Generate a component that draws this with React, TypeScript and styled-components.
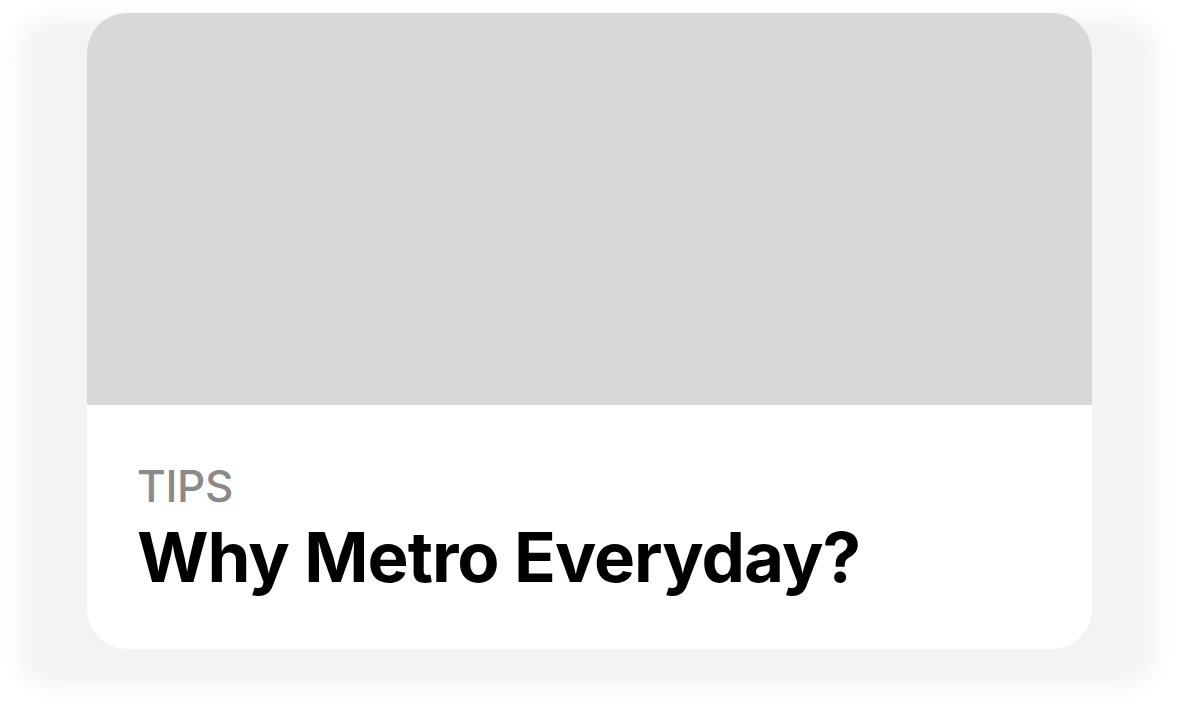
import React from "react";
import styled, { createGlobalStyle } from "styled-components";

const GlobalStyle = createGlobalStyle`
  html, body {
    margin: 0;
    padding: 0;
    background: #ffffff;
    font-family: Inter, "Noto Sans", "Liberation Sans", sans-serif;
  }
`;

const Page = styled.div`
  width: 1179px;
  height: 710px;
  box-sizing: border-box;
  padding: 13px 0 0 87px;
  overflow: hidden;
`;

const CardWrap = styled.div`
  position: relative;
  width: 1005px;
  height: 636px;
  isolation: isolate;

  &::before {
    content: "";
    position: absolute;
    top: 6px;
    left: -67px;
    right: -63px;
    bottom: -36px;
    background: #f3f3f3;
    filter: blur(10px);
    border-radius: 30px;
    z-index: -1;
  }
`;

const Card = styled.article`
  display: flex;
  flex-direction: column;
  width: 100%;
  height: 100%;
  border-radius: 40px;
  overflow: hidden;
  background: #ffffff;
`;

const Artwork = styled.div`
  height: 392px;
  flex: none;
  background: #d8d8d8;
`;

const Body = styled.div`
  display: flex;
  flex-direction: column;
  padding: 55px 50px 0 50px;
`;

const Eyebrow = styled.span`
  font-size: 44px;
  line-height: 52px;
  font-weight: 500;
  color: #8a8a8a;
  letter-spacing: -0.3px;
`;

const Title = styled.h2`
  margin: 5px 0 0 0;
  font-size: 69px;
  line-height: 80px;
  font-weight: 700;
  color: #000000;
  letter-spacing: -1px;
`;

export default function App() {
  return (
    <>
      <GlobalStyle />
      <Page>
        <CardWrap>
          <Card>
            <Artwork />
            <Body>
              <Eyebrow>TIPS</Eyebrow>
              <Title>Why Metro Everyday?</Title>
            </Body>
          </Card>
        </CardWrap>
      </Page>
    </>
  );
}
